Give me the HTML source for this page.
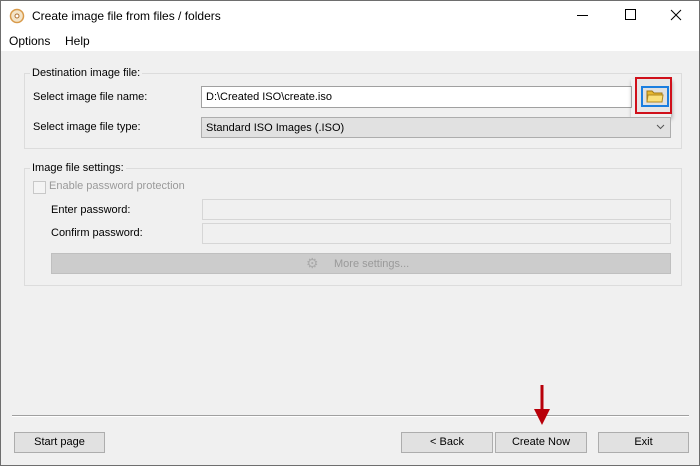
<!DOCTYPE html><html><head><style>
body{margin:0;width:700px;height:466px;overflow:hidden;font-family:"Liberation Sans",sans-serif;font-size:11px;color:#000;}
.w{position:absolute;left:0;top:0;width:698px;height:464px;border:1px solid #6e6e6e;background:#f0f0f0;}
.a{position:absolute;}
.g{position:absolute;border:1px solid #dcdcdc;}
.lg{position:absolute;background:#f0f0f0;padding:0 2px;}
.in{position:absolute;border:1px solid #a0a0a0;background:#fff;box-sizing:border-box;}
.dis{position:absolute;border:1px solid #d6d6d6;background:#f0f0f0;box-sizing:border-box;}
.btn{position:absolute;border:1px solid #adadad;background:#e1e1e1;box-sizing:border-box;text-align:center;line-height:19px;}
</style></head><body><div class="w">
<div class="a" style="left:0;top:0;width:698px;height:50px;background:#fff"></div>
<svg class="a" style="left:8px;top:7px" width="16" height="16"><circle cx="8" cy="8" r="6.5" fill="#f4e4c8" stroke="#d89a4a" stroke-width="1.5"/><circle cx="8" cy="8" r="2" fill="#fff" stroke="#b07030"/></svg>
<div class="a" style="left:31px;top:8px;font-size:12px">Create image file from files / folders</div>
<div class="a" style="left:576px;top:14px;width:11px;height:1px;background:#000"></div>
<div class="a" style="left:624px;top:8px;width:9px;height:9px;border:1px solid #000"></div>
<svg class="a" style="left:669px;top:8px" width="12" height="12"><path d="M1 1L11 11M11 1L1 11" stroke="#000"/></svg>
<div class="a" style="left:8px;top:33px;font-size:12px">Options</div>
<div class="a" style="left:64px;top:33px;font-size:12px">Help</div>

<div class="g" style="left:23px;top:72px;width:656px;height:74px"></div>
<div class="lg" style="left:29px;top:66px">Destination image file:</div>
<div class="a" style="left:32px;top:90px">Select image file name:</div>
<div class="in" style="left:200px;top:85px;width:431px;height:22px;padding:4px 4px">D:\Created ISO\create.iso</div>
<div class="a" style="left:630px;top:78px;width:40px;height:38px;box-shadow:1px 2px 4px rgba(0,0,0,.35)"></div>
<div class="a" style="left:634px;top:76px;width:37px;height:37px;border:2px solid #d0101a;box-sizing:border-box;background:#e6e6e6"></div>
<div class="a" style="left:640px;top:85px;width:28px;height:21px;border:2px solid #1a7ee0;box-sizing:border-box;background:#e1e1e1"></div>
<svg class="a" style="left:645px;top:88px" width="18" height="14"><path d="M1 2h5l2 2h8v9H1z" fill="#e8b830" stroke="#a07818"/><path d="M2 6h15l-1 7H1z" fill="#fbe07a" stroke="#b08820"/></svg>
<div class="a" style="left:32px;top:120px">Select image file type:</div>
<div class="a" style="left:200px;top:116px;width:470px;height:21px;border:1px solid #adadad;box-sizing:border-box;background:#e1e1e1;padding:4px 4px">Standard ISO Images (.ISO)</div>
<svg class="a" style="left:655px;top:123px" width="9" height="6"><path d="M1 1l3.5 3.5L8 1" stroke="#555" fill="none"/></svg>

<div class="g" style="left:23px;top:167px;width:656px;height:116px"></div>
<div class="lg" style="left:29px;top:161px">Image file settings:</div>
<div class="a" style="left:32px;top:180px;width:11px;height:11px;border:1px solid #c8c8c8;background:#f4f4f4"></div>
<div class="a" style="left:48px;top:179px;color:#9a9a9a">Enable password protection</div>
<div class="a" style="left:50px;top:203px">Enter password:</div>
<div class="dis" style="left:201px;top:198px;width:469px;height:21px"></div>
<div class="a" style="left:50px;top:226px">Confirm password:</div>
<div class="dis" style="left:201px;top:222px;width:469px;height:21px"></div>
<div class="a" style="left:50px;top:252px;width:620px;height:21px;background:#cccccc;border:1px solid #bfbfbf;box-sizing:border-box"></div>
<div class="a" style="left:305px;top:254px;color:#aaa;font-size:14px">⚙</div>
<div class="a" style="left:333px;top:257px;color:#9a9a9a">More settings...</div>

<div class="a" style="left:11px;top:414px;width:677px;height:1px;background:#a0a0a0"></div>
<div class="a" style="left:11px;top:415px;width:677px;height:1px;background:#fff"></div>
<div class="btn" style="left:13px;top:431px;width:91px;height:21px">Start page</div>
<div class="btn" style="left:400px;top:431px;width:92px;height:21px">&lt; Back</div>
<div class="btn" style="left:494px;top:431px;width:92px;height:21px">Create Now</div>
<div class="btn" style="left:597px;top:431px;width:91px;height:21px">Exit</div>
<svg class="a" style="left:528px;top:384px" width="26" height="44"><path d="M13 0v28" stroke="#b8000a" stroke-width="3"/><path d="M5 24l8 16 8-16z" fill="#b8000a"/></svg>
</div></body></html>
